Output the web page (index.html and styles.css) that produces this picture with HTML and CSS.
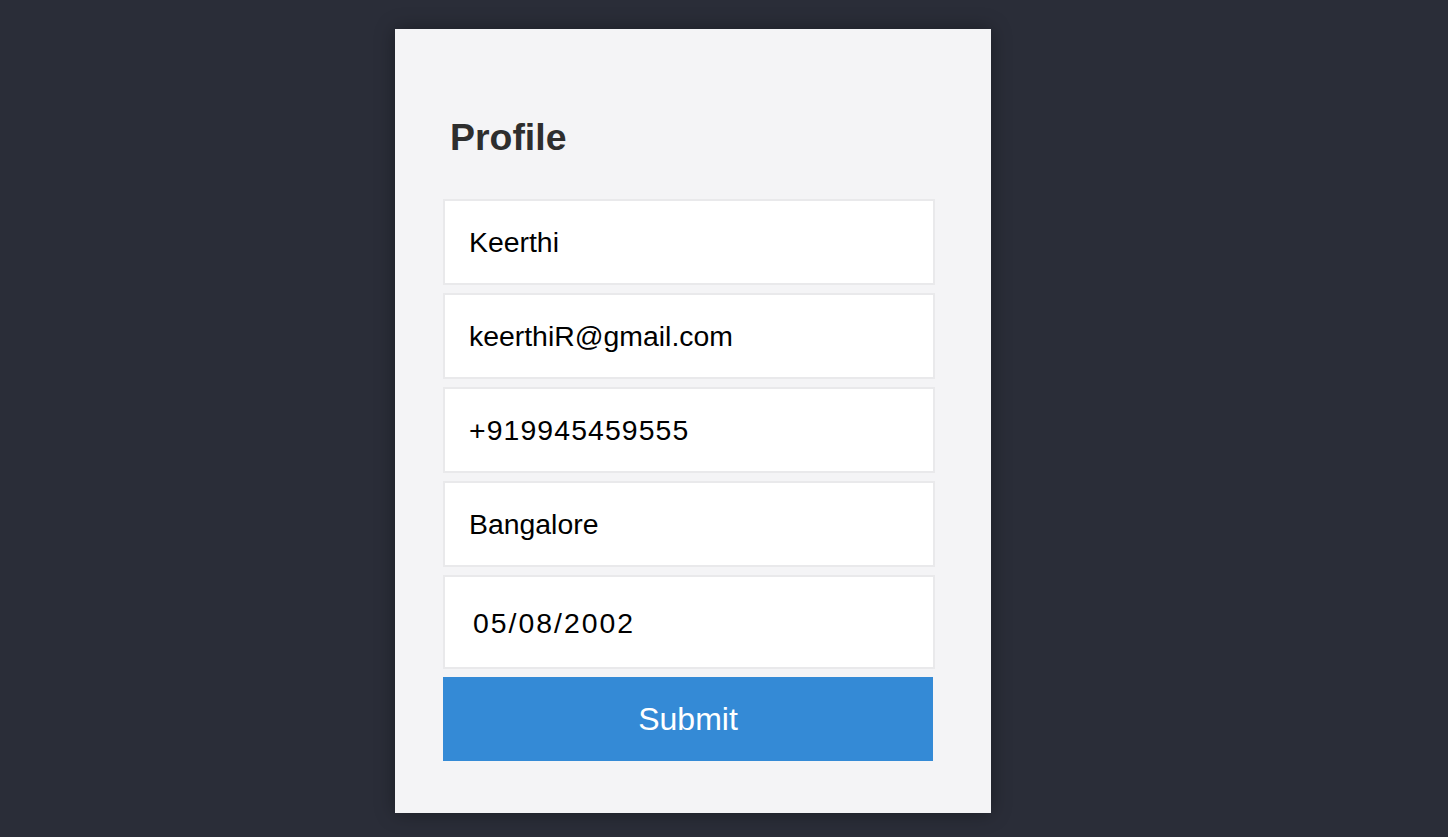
FILE: index.html
```html
<!DOCTYPE html>
<html lang="en">
<head>
<meta charset="utf-8">
<title>Profile</title>
<link rel="stylesheet" href="styles.css">
</head>
<body>
<div class="page">
  <form class="card">
    <h3 class="title">Profile</h3>
    <div class="fields">
      <input class="field" type="text" value="Keerthi">
      <input class="field" type="text" value="keerthiR@gmail.com">
      <input class="field num" type="text" value="+919945459555">
      <input class="field" type="text" value="Bangalore">
      <input class="field date" type="text" value="05/08/2002">
      <button class="submit" type="button">Submit</button>
    </div>
  </form>
</div>
</body>
</html>
```

FILE: styles.css
```css
* { box-sizing: border-box; }

html, body {
  margin: 0;
  padding: 0;
  height: 100%;
}

body {
  background: #2a2d38;
  font-family: "Liberation Sans", Arial, sans-serif;
}

.page {
  display: flex;
  padding: 29px 0 0 395px;
}

.card {
  width: 596px;
  height: 784px;
  background: #f4f4f6;
  padding: 86px 48px 52px;
  box-shadow: 0 0 18px rgba(0, 0, 0, 0.35);
}

.title {
  margin: 0 0 40px 7px;
  font-size: 37.44px;
  line-height: 44px;
  font-weight: 700;
  color: #2e2e2e;
}

.fields {
  display: flex;
  flex-direction: column;
  gap: 8px;
}

.field {
  display: block;
  width: 492px;
  height: 86px;
  margin: 0;
  padding: 1px 24px 0;
  border: 2px solid #e9e9eb;
  border-radius: 0;
  background: #ffffff;
  font-family: "Liberation Sans", Arial, sans-serif;
  font-size: 28.4px;
  color: #000;
  outline: none;
}

.field.num {
  letter-spacing: 1.1px;
}

.field.date {
  height: 94px;
  padding-left: 28px;
  padding-top: 2px;
  letter-spacing: 2px;
}

.submit {
  display: block;
  width: 490px;
  height: 84px;
  margin: 0;
  border: 0;
  border-radius: 0;
  background: #348ad6;
  color: #ffffff;
  font-family: "Liberation Sans", Arial, sans-serif;
  font-size: 32px;
  padding: 0;
  cursor: pointer;
}
```
